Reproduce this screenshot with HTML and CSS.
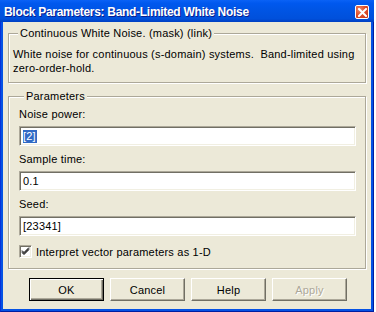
FILE: index.html
```html
<!DOCTYPE html>
<html>
<head>
<meta charset="utf-8">
<link rel="stylesheet" href="styles.css">
</head>
<body>
<div class="window">
  <div class="titlebar">
    <span class="title">Block Parameters: Band-Limited White Noise</span>
    <span class="close"><svg width="9" height="9" viewBox="0 0 9 9"><path d="M1 1L8 8M8 1L1 8" stroke="#fff" stroke-width="2" stroke-linecap="square"/></svg></span>
  </div>
  <div class="client">
    <fieldset class="group desc">
      <legend>Continuous White Noise. (mask) (link)</legend>
      <p class="text">White noise for continuous (s-domain) systems.&nbsp; Band-limited using zero-order-hold.</p>
    </fieldset>
    <fieldset class="group params">
      <legend>Parameters</legend>
      <div class="label first">Noise power:</div>
      <div class="input"><span class="sel">[2]</span></div>
      <div class="label">Sample time:</div>
      <div class="input">0.1</div>
      <div class="label">Seed:</div>
      <div class="input">[23341]</div>
      <div class="check-row">
        <span class="checkbox"><svg width="9" height="9" viewBox="0 0 9 9"><path d="M1 3.5L3 5.5L8 0.5M1 4.5L3 6.5L8 1.5M1 5.5L3 7.5L8 2.5" stroke="#000" stroke-width="1" fill="none"/></svg></span>
        <span>Interpret vector parameters as 1-D</span>
      </div>
    </fieldset>
    <div class="buttons">
      <div class="btn default"><span>OK</span></div>
      <div class="btn"><span>Cancel</span></div>
      <div class="btn"><span>Help</span></div>
      <div class="btn disabled"><span>Apply</span></div>
    </div>
  </div>
</div>
</body>
</html>
```

FILE: styles.css
```css
html, body {
  margin: 0;
  padding: 0;
  background: #ffffff;
}
body {
  font-family: "Liberation Sans", Arial, sans-serif;
  font-size: 11px;
  letter-spacing: 0.2px;
  color: #000;
}
.window {
  width: 374px;
  height: 312px;
  box-sizing: border-box;
  background: #0552E4;
  border-left: 1px solid #0831D9;
  border-right: 1px solid #001EA0;
  border-bottom: 1px solid #001EA0;
  display: flex;
  flex-direction: column;
}
.titlebar {
  height: 22px;
  flex: none;
  margin: 0 -1px;
  padding: 0 5px 0 4px;
  display: flex;
  align-items: center;
  justify-content: space-between;
  background: linear-gradient(to bottom, #0A62F6 0%, #0058EE 15%, #0054E3 50%, #0050DB 85%, #003FC2 100%);
}
.title {
  color: #fff;
  font-weight: bold;
  font-size: 12px;
  letter-spacing: -0.3px;
  text-shadow: 1px 1px 0 #0A1E8E;
  padding-top: 1px;
}
.close {
  width: 14px;
  height: 14px;
  box-sizing: border-box;
  border: 1px solid #fff;
  border-radius: 2px;
  background: radial-gradient(circle at 30% 30%, #F08A6A 0%, #E0502A 45%, #C8361A 100%);
  display: flex;
  align-items: center;
  justify-content: center;
  margin-top: 2px;
}
.close svg { display: block; }
.client {
  flex: 1;
  margin: 0 2px 2px 2px;
  background: #ECE9D8;
  padding: 5px 5px 0 5px;
  display: flex;
  flex-direction: column;
}
.group {
  margin: 0;
  border: 1px solid #ACA899;
  box-shadow: 1px 1px 0 #fff, inset 1px 1px 0 #fff;
  min-width: 0;
}
.group legend {
  line-height: 13px;
  padding: 0 2px;
  margin-left: 5px;
  background: #ECE9D8;
}
.desc {
  padding: 7px 4px 7px 4px;
}
.text {
  margin: 0;
  line-height: 14px;
}
.params {
  margin-top: 7px;
  padding: 5px 9px 10px 10px;
}
.label {
  line-height: 13px;
  margin-top: 7px;
}
.label.first {
  margin-top: 0;
}
.input {
  margin-top: 5px;
  height: 20px;
  box-sizing: border-box;
  background: #fff;
  border-top: 1px solid #ACA899;
  border-left: 1px solid #ACA899;
  border-bottom: 1px solid #fff;
  border-right: 1px solid #fff;
  box-shadow: inset 1px 1px 0 #716F64, inset -1px -1px 0 #F1EFE2;
  padding: 0 3px;
  line-height: 18px;
  display: flex;
  align-items: center;
}
.sel {
  background: #316AC5;
  color: #fff;
  line-height: 13px;
  padding: 0 1px 0 0;
}
.check-row {
  margin-top: 9px;
  height: 13px;
  display: flex;
  align-items: center;
  gap: 4px;
}
.checkbox {
  width: 13px;
  height: 13px;
  box-sizing: border-box;
  background: #fff;
  border-top: 1px solid #ACA899;
  border-left: 1px solid #ACA899;
  border-bottom: 1px solid #fff;
  border-right: 1px solid #fff;
  box-shadow: inset 1px 1px 0 #716F64, inset -1px -1px 0 #F1EFE2;
  display: flex;
  align-items: center;
  justify-content: center;
}
.checkbox svg { display: block; }
.buttons {
  margin-top: 9px;
  padding-left: 21px;
  display: flex;
  gap: 6px;
}
.btn {
  width: 75px;
  height: 23px;
  box-sizing: border-box;
  background: #ECE9D8;
  border-top: 1px solid #fff;
  border-left: 1px solid #fff;
  border-right: 1px solid #716F64;
  border-bottom: 1px solid #716F64;
  box-shadow: inset -1px -1px 0 #ACA899;
  display: flex;
  align-items: center;
  justify-content: center;
}
.btn.default {
  border: 1px solid #000;
  box-shadow: inset 1px 1px 0 #fff, inset -1px -1px 0 #716F64, inset -2px -2px 0 #ACA899;
}
.btn.disabled span {
  color: #ACA899;
  text-shadow: 1px 1px 0 #fff;
}
```
